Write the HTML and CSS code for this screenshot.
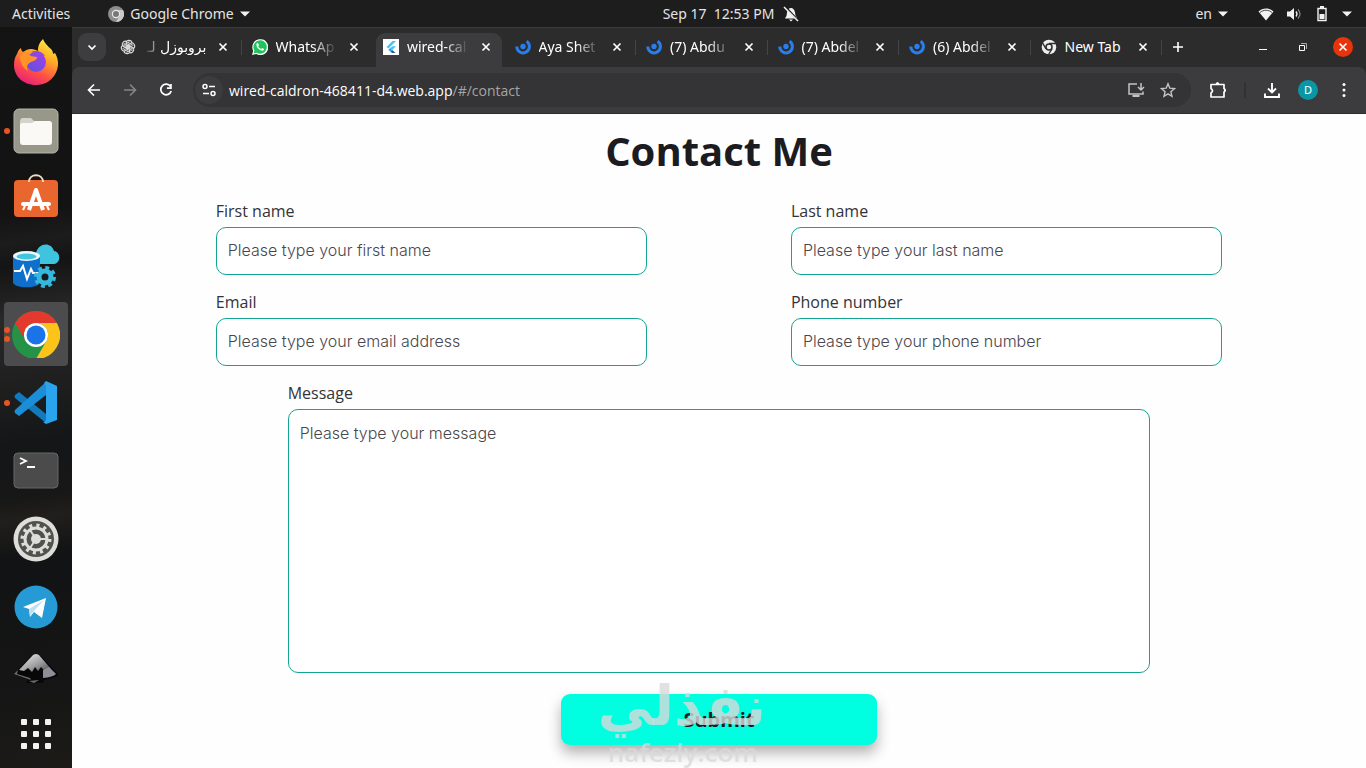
FILE: index.html
```html
<!DOCTYPE html>
<html lang="en">
<head>
    <meta charset="UTF-8">
    <meta name="viewport" content="width=device-width, initial-scale=1.0">
    <title>Contact Me</title>
    <link rel="stylesheet" href="styles.css">
</head>
<body>
    <!-- Shared symbols -->
    <svg class="symbols" aria-hidden="true">
        <symbol id="x" viewBox="0 0 16 16"><path d="M4.500 4.500l7 7M11.500 4.500l-7 7" stroke="currentColor" stroke-width="1.700"/></symbol>
        <symbol id="swirl" viewBox="0 0 16 16">
            <circle cx="8" cy="7.500" r="2.700" fill="#2b7de9"/>
            <path d="M1.800 7.500a6.300 6.300 0 1 0 9.800-5.200" fill="none" stroke="#2b7de9" stroke-width="3"/>
        </symbol>
        <symbol id="caret" viewBox="0 0 10 6"><path d="M0 .5h10L5 5.500z" fill="#f2f2f2"/></symbol>
    </svg>

    <header class="topbar">
        <div class="topbar-left">
            <span>Activities</span>
            <span class="app-menu">
                <svg width="16" height="16" viewBox="0 0 16 16"><circle cx="8" cy="8" r="8" fill="#8d8d8d"/><path d="M8 4h7a8 8 0 0 1-7 12l3.500-6z" fill="#c9c9c9"/><circle cx="8" cy="8" r="4.200" fill="#e8e8e8"/><circle cx="8" cy="8" r="3" fill="#777"/></svg>
                Google Chrome
                <svg width="10" height="6"><use href="#caret"/></svg>
            </span>
        </div>
        <div class="clock">
            <span>Sep 17&nbsp; 12:53 PM</span>
            <svg width="16" height="16" viewBox="0 0 16 16"><path d="M2.500 11.500c1.500-1.500 1-3 1.500-5C4.500 3.500 6 2 8 2s3.500 1.500 4 4.500c.5 2 0 3.500 2 5v1H2z" fill="#f2f2f2"/><path d="M6 13.500h4L8 15.500z" fill="#f2f2f2"/><path d="M2.500 1l13 14" stroke="#1d1d1d" stroke-width="2"/><path d="M1 1l14 14" stroke="#f2f2f2" stroke-width="1.500"/></svg>
        </div>
        <div class="topbar-right">
            <span class="lang">en <svg width="10" height="6"><use href="#caret"/></svg></span>
            <svg width="16" height="14" viewBox="0 0 16 14"><path d="M.5 4.500C4.500.5 11.500.5 15.500 4.500L8 13.500z" fill="#f2f2f2"/><path d="M2 5.500c3.500-3 8.500-3 12 0" fill="none" stroke="#1d1d1d" stroke-width=".8"/></svg>
            <svg width="16" height="14" viewBox="0 0 16 14"><path d="M1 4.500h3L8 1v12L4 9.500H1z" fill="#f2f2f2"/><path d="M10 4.500q2 2.500 0 5" fill="none" stroke="#f2f2f2" stroke-width="1.300"/><path d="M12 2.500q4 4.500 0 9" fill="none" stroke="#888" stroke-width="1.200"/></svg>
            <svg class="battery" width="10" height="16" viewBox="0 0 10 16"><path d="M1 2.500h8v12H1z" fill="none" stroke="#f2f2f2" stroke-width="1.400"/><path d="M3 0h4v2H3zM2.500 8h5v5h-5z" fill="#f2f2f2"/></svg>
            <svg width="10" height="6"><use href="#caret"/></svg>
        </div>
    </header>

    <div class="desktop">
        <nav class="dock">
            <div class="dock-item">
                <svg width="48" height="48" viewBox="0 0 48 48">
                    <defs>
                        <linearGradient id="ff" x1=".8" y1="0" x2=".3" y2="1"><stop offset="0" stop-color="#fff04a"/><stop offset=".35" stop-color="#ffae25"/><stop offset=".7" stop-color="#ff4f45"/><stop offset="1" stop-color="#e6207c"/></linearGradient>
                        <linearGradient id="ffp" x1="0" y1="1" x2="1" y2="0"><stop offset="0" stop-color="#5a55d8"/><stop offset="1" stop-color="#a63cf0"/></linearGradient>
                    </defs>
                    <path d="M5 16c1-3 2-5 4-6 0 2 1 3 2 4 3-2 5-3 8-3 3 0 5 1 7 2 0-6 2-9 5-12 2 5 5 7 8 10 2 2 2 4 2 5l2-1c3 5 4 11 2 17-3 9-11 15-21 15C11 47 2 38 2 27c0-5 1-8 3-11z" fill="url(#ff)"/>
                    <circle cx="24" cy="24" r="10" fill="url(#ffp)"/>
                    <path d="M8 17c4-2 8-2 11 1l6 1c0 3-3 4-6 5-4 2-5 5-3 9-5-3-8-8-8-16z" fill="#ff9327"/>
                    <path d="M19 14c5-2 11-1 14 4-3-1-5 0-8-2z" fill="#9146e8"/>
                </svg>
            </div>
            <div class="dock-item running">
                <svg width="48" height="48" viewBox="0 0 48 48"><rect x="2" y="3" width="44" height="44" rx="5" fill="#97978a" stroke="#b4b4aa"/><path d="M8 16q0-4 3-4h8l3 3h14q4 0 4 4v6H8z" fill="#d5d4cb"/><path d="M8 19q0-2 3-2h9l3-2h14q3 0 3 3v18q0 3-3 3H11q-3 0-3-3z" fill="#faf9f5"/></svg>
            </div>
            <div class="dock-item">
                <svg width="48" height="48" viewBox="0 0 48 48"><rect x="2" y="6" width="44" height="37" rx="4" fill="#e9662f"/><path d="M17 8c0-9 14-9 14 0" fill="none" stroke="#f0dcc3" stroke-width="2"/><path d="M17 36l7-20 7 20" fill="none" stroke="#fff" stroke-width="4" stroke-linejoin="round"/><path d="M11 30h26" stroke="#fff" stroke-width="4" stroke-linecap="round"/><path d="M13 32l-2 4M35 32l2 4" stroke="#fff" stroke-width="2"/></svg>
            </div>
            <div class="dock-item">
                <svg width="48" height="48" viewBox="0 0 48 48">
                    <path d="M25 22c-8-1-8-10-1-11 2-10 15-12 18-2 7 1 7 12 0 13z" fill="#3fc4e0"/>
                    <path d="M1 14v26c0 7 27 7 27 0V14z" fill="#0f70cb"/>
                    <ellipse cx="14.500" cy="14" rx="13.500" ry="5" fill="#eaf7fc"/><ellipse cx="14.500" cy="14.500" rx="10" ry="3" fill="#43c5df"/>
                    <path d="M2 29h6l3-5 4 13 4-10 2 4h7" fill="none" stroke="#fff" stroke-width="2"/>
                    <circle cx="33" cy="35" r="9.500" fill="none" stroke="#35b8de" stroke-width="3" stroke-dasharray="4 3.460"/>
                    <circle cx="33" cy="35" r="6" fill="none" stroke="#35b8de" stroke-width="5"/>
                </svg>
            </div>
            <div class="dock-item running active">
                <svg width="48" height="48" viewBox="0 0 48 48"><circle cx="24" cy="25" r="24" fill="#259347"/><path d="M3.200 13A24 24 0 0 1 44.800 13H24a12 12 0 0 0-10.400 18z" fill="#e33a2d"/><path d="M44.800 13A24 24 0 0 1 24 49l10.400-18A12 12 0 0 0 24 13z" fill="#fcc31b"/><circle cx="24" cy="25" r="12" fill="#fff"/><circle cx="24" cy="25" r="9.500" fill="#1a73e8"/></svg>
            </div>
            <div class="dock-item running">
                <svg width="48" height="48" viewBox="0 0 48 48"><path d="M34 14v22L7 14l-4 3q-1 1 0 3l31 25z" fill="#1279be"/><path d="M34 4L3 32q-1 1 0 3l4 3 27-21z" fill="#1a8fd8"/><path d="M34 3l11 5v34l-11 4-3-2c2 0 3-1 3-3V9c0-2-1-3-2-4z" fill="#2ba4ee"/></svg>
            </div>
            <div class="dock-item">
                <svg width="48" height="48" viewBox="0 0 48 48"><rect x="2" y="7" width="44" height="35" rx="4" fill="#4b4b4b" stroke="#666"/><path d="M8 12l6 3-6 3M15 21h8" fill="none" stroke="#fff" stroke-width="1.800"/></svg>
            </div>
            <div class="dock-item">
                <svg width="48" height="48" viewBox="0 0 48 48"><circle cx="24" cy="25" r="22.500" fill="#deded9"/><circle cx="24" cy="25" r="18" fill="#51514f"/><circle cx="24" cy="25" r="13.500" fill="none" stroke="#deded9" stroke-width="4" stroke-dasharray="3 4.070"/><circle cx="24" cy="25" r="11" fill="none" stroke="#deded9" stroke-width="3"/><circle cx="24" cy="25" r="5" fill="#deded9"/><path d="M24 25h11M24 25l-6-9M24 25l-6 9" stroke="#deded9" stroke-width="2"/></svg>
            </div>
            <div class="dock-item">
                <svg width="48" height="48" viewBox="0 0 48 48"><circle cx="24" cy="25" r="21.500" fill="#269ad4"/><path d="M11 25l23-9-4 20-8-6-4 5-1-8z" fill="#fff"/><path d="M17 27l15-9-11 12-3 4z" fill="#bfe0f2"/></svg>
            </div>
            <div class="dock-item">
                <svg width="48" height="48" viewBox="0 0 48 48">
                    <defs><linearGradient id="ink" x1="0" y1="0" x2="1" y2="1"><stop offset="0" stop-color="#f4f4f4"/><stop offset=".6" stop-color="#999"/><stop offset="1" stop-color="#444"/></linearGradient></defs>
                    <path d="M2 24L20 5q4-3 8 0l18 19q1 3-7 4l-7 2q1 3-5 3H15q-3-2 3-3z" fill="#08080a"/>
                    <path d="M7 20L21 5q3-2 6 0l12 14-7 1-3-3-3 4-3-4-3 5-4-4-4 3z" fill="url(#ink)"/>
                    <path d="M31 20l6-3 7 7q-3 3-13 4z" fill="#8d8f98"/><path d="M2 24l4-4-1 4 13 4 1 2zM17 31l10-1-5 3z" fill="#6d6d6d"/>
                </svg>
            </div>
            <div class="dock-apps">
                <i></i><i></i><i></i><i></i><i></i><i></i><i></i><i></i><i></i>
            </div>
        </nav>

        <section class="window">
            <div class="tabstrip">
                <button class="tab-search" aria-label="Search tabs"><svg width="12" height="12" viewBox="0 0 12 12"><path d="M2.500 4.500L6 8l3.500-3.500" fill="none" stroke="#fff" stroke-width="1.700"/></svg></button>
                <div class="tabs">
                    <div class="tab">
                        <svg width="16" height="16" viewBox="0 0 16 16"><g fill="none" stroke="#ddd" stroke-width="1.100"><path id="knot" d="M6 8V4.200c0-4 6-3.500 6 0M6 4.700l3.500-2M6 8l4.500 2.500"/><use href="#knot" transform="rotate(60 8 8)"/><use href="#knot" transform="rotate(120 8 8)"/><use href="#knot" transform="rotate(180 8 8)"/><use href="#knot" transform="rotate(240 8 8)"/><use href="#knot" transform="rotate(300 8 8)"/></g></svg>
                        <span class="tab-title rtl" lang="ar" dir="rtl">بروبوزل لـ</span>
                        <button class="tab-close" aria-label="Close"><svg width="16" height="16"><use href="#x"/></svg></button>
                    </div>
                    <div class="tab">
                        <svg width="16" height="16" viewBox="0 0 16 16"><path d="M0 16l1.200-4.200A8 8 0 1 1 4.200 15z" fill="#fff"/><path d="M1.500 14.500l.9-3A6.700 6.700 0 1 1 4.600 13.700z" fill="#1fc45a"/><path d="M5.200 4c-1.700 1.200-.4 4.200 1.200 5.800s4.300 2.700 5.500 1.100c.5-.8 0-1.300-1.600-2l-1 1.100C7.800 9.500 7 8.700 6.200 7.200l.8-1C6.300 4.200 6 3.600 5.200 4z" fill="#fff"/></svg>
                        <span class="tab-title">WhatsAp</span>
                        <button class="tab-close" aria-label="Close"><svg width="16" height="16"><use href="#x"/></svg></button>
                    </div>
                    <div class="tab current">
                        <svg width="16" height="16" viewBox="0 0 16 16"><path d="M0 0h16v16H0z" fill="#fff"/><path d="M9.500 2H13L5.500 9.500 3.500 8z" fill="#45c5f5"/><path d="M9.500 7.200H13L9.200 11l-2-2z" fill="#45c5f5"/><path d="M7.200 9l2 2-2 1.500-1.800-1.700z" fill="#2a9fe8"/><path d="M7.300 12.700L9.200 11l3.300 3H9.500z" fill="#1659a8"/></svg>
                        <span class="tab-title">wired-cal</span>
                        <button class="tab-close" aria-label="Close"><svg width="16" height="16"><use href="#x"/></svg></button>
                    </div>
                    <div class="tab">
                        <svg width="16" height="16"><use href="#swirl"/></svg>
                        <span class="tab-title">Aya Shet</span>
                        <button class="tab-close" aria-label="Close"><svg width="16" height="16"><use href="#x"/></svg></button>
                    </div>
                    <div class="tab">
                        <svg width="16" height="16"><use href="#swirl"/></svg>
                        <span class="tab-title">(7) Abdu</span>
                        <button class="tab-close" aria-label="Close"><svg width="16" height="16"><use href="#x"/></svg></button>
                    </div>
                    <div class="tab">
                        <svg width="16" height="16"><use href="#swirl"/></svg>
                        <span class="tab-title">(7) Abdel</span>
                        <button class="tab-close" aria-label="Close"><svg width="16" height="16"><use href="#x"/></svg></button>
                    </div>
                    <div class="tab">
                        <svg width="16" height="16"><use href="#swirl"/></svg>
                        <span class="tab-title">(6) Abdel</span>
                        <button class="tab-close" aria-label="Close"><svg width="16" height="16"><use href="#x"/></svg></button>
                    </div>
                    <div class="tab">
                        <svg width="16" height="16" viewBox="0 0 16 16"><circle cx="8" cy="8" r="7.300" fill="#eee"/><circle cx="8" cy="8" r="3" fill="#eee" stroke="#2c2c2c" stroke-width="1.500"/><path d="M8 4.500h7M5 9.800L1.500 3.800M11 9.800L7.500 15.500" stroke="#2c2c2c" stroke-width="1.300"/></svg>
                        <span class="tab-title full">New Tab</span>
                        <button class="tab-close" aria-label="Close"><svg width="16" height="16"><use href="#x"/></svg></button>
                    </div>
                </div>
                <button class="new-tab" aria-label="New tab"><svg width="12" height="12" viewBox="0 0 12 12"><path d="M6 1v10M1 6h10" stroke="#fff" stroke-width="1.600"/></svg></button>
                <div class="window-controls">
                    <button aria-label="Minimize"><svg width="10" height="10" viewBox="0 0 10 10"><path d="M1 7.500h8" stroke="#fff"/></svg></button>
                    <button aria-label="Restore"><svg width="10" height="10" viewBox="0 0 10 10"><path d="M1.500 3.500h5v5h-5z" fill="none" stroke="#fff"/><path d="M3 1.500h5.500V7" fill="none" stroke="#aaa"/></svg></button>
                    <button class="close" aria-label="Close window"><svg width="16" height="16"><use href="#x"/></svg></button>
                </div>
            </div>

            <div class="toolbar">
                <button class="tool" aria-label="Back"><svg width="16" height="16" viewBox="0 0 16 16"><path d="M14 8H3M8 2.500L2.500 8 8 13.500" fill="none" stroke="#fff" stroke-width="1.600"/></svg></button>
                <button class="tool" aria-label="Forward"><svg width="16" height="16" viewBox="0 0 16 16"><path d="M2 8h11M8 2.500L13.500 8 8 13.500" fill="none" stroke="#858585" stroke-width="1.600"/></svg></button>
                <button class="tool" aria-label="Reload"><svg width="16" height="16" viewBox="0 0 16 16"><path d="M12.500 4.500A5.300 5.300 0 1 0 13.200 9" fill="none" stroke="#fff" stroke-width="1.700"/><path d="M13.800 2v5H8.900V5.300h3.200V2z" fill="#fff"/></svg></button>
                <div class="omnibox">
                    <span class="site-info"><svg width="14" height="14" viewBox="0 0 14 14"><g fill="none" stroke="#fff" stroke-width="1.500"><circle cx="3" cy="3.500" r="2"/><circle cx="11" cy="10.500" r="2"/><path d="M7 3.500h6M1 10.500h6"/></g></svg></span>
                    <span class="url">wired-caldron-468411-d4.web.app<span class="path">/#/contact</span></span>
                    <svg width="18" height="16" viewBox="0 0 18 16"><path d="M10 2H2v10h14V9.500" fill="none" stroke="#c4c4c4" stroke-width="1.500"/><path d="M5.500 13h7v2h-7z" fill="#c4c4c4"/><path d="M14 1v7M11 5l3 3 3-3" fill="none" stroke="#c4c4c4" stroke-width="1.500"/></svg>
                    <svg width="16" height="16" viewBox="0 0 16 16"><path d="M8 1.800l1.800 4.400 4.700.4-3.600 3.100 1.100 4.600L8 11.800l-4 2.500 1.100-4.600L1.500 6.600l4.700-.4z" fill="none" stroke="#c4c4c4" stroke-width="1.400"/></svg>
                </div>
                <button class="tool" aria-label="Extensions"><svg width="18" height="18" viewBox="0 0 18 18"><path d="M2 3.500h13v4q2 1.500 0 3.500v5H2v-4q3-2.200 0-4.500z" fill="none" stroke="#fff" stroke-width="1.700" stroke-linejoin="round"/><path d="M6.500 3q2-4 4 0zM15 7.500q4 2 0 4z" fill="#fff"/></svg></button>
                <span class="divider"></span>
                <button class="tool" aria-label="Downloads"><svg width="18" height="18" viewBox="0 0 18 18"><path d="M9 2v9M5 7.500L9 11.500l4-4M2 12.500V16h14v-3.500" fill="none" stroke="#fff" stroke-width="1.900"/></svg></button>
                <button class="tool" aria-label="Profile"><span class="avatar">D</span></button>
                <button class="tool" aria-label="Menu"><svg width="4" height="16" viewBox="0 0 4 16"><g fill="#fff"><circle cx="2" cy="2.500" r="1.500"/><circle cx="2" cy="8" r="1.500"/><circle cx="2" cy="13.500" r="1.500"/></g></svg></button>
            </div>

            <main class="page">
                <h1>Contact Me</h1>
                <form class="contact-form">
                    <div class="row">
                        <div class="field">
                            <label for="first-name">First name</label>
                            <input type="text" id="first-name" placeholder="Please type your first name">
                        </div>
                        <div class="field">
                            <label for="last-name">Last name</label>
                            <input type="text" id="last-name" placeholder="Please type your last name">
                        </div>
                    </div>
                    <div class="row">
                        <div class="field">
                            <label for="email">Email</label>
                            <input type="email" id="email" placeholder="Please type your email address">
                        </div>
                        <div class="field">
                            <label for="phone">Phone number</label>
                            <input type="tel" id="phone" placeholder="Please type your phone number">
                        </div>
                    </div>
                    <div class="row">
                        <div class="field message">
                            <label for="message">Message</label>
                            <textarea id="message" placeholder="Please type your message"></textarea>
                        </div>
                    </div>
                    <div class="submit-wrap">
                        <button type="submit" class="submit">Submit</button>
                        <div class="watermark">
                            <span class="mark-ar" lang="ar" dir="rtl">نفذلي</span>
                            <span class="mark-en">nafezly.com</span>
                        </div>
                    </div>
                </form>
            </main>
        </section>
    </div>
</body>
</html>
```
FILE: styles.css
```css
* {
    box-sizing: border-box;
}
body {
    margin: 0;
    height: 100vh;
    display: flex;
    flex-direction: column;
    overflow: hidden;
    background-color: #1d1d1d;
    color: #f2f2f2;
    font-family: "Noto Sans", "Open Sans", "DejaVu Sans", sans-serif;
    font-size: 14px;
}
button {
    display: flex;
    align-items: center;
    justify-content: center;
    padding: 0;
    border: none;
    background: none;
    color: #fff;
    font: inherit;
    cursor: pointer;
}
svg {
    display: block;
    flex: none;
}
.symbols {
    position: absolute;
    width: 0;
    height: 0;
}

/* Top bar */
.topbar {
    flex: none;
    display: flex;
    align-items: center;
    height: 27px;
    padding: 0 14px 0 12px;
    color: #e4e4e4;
}
.topbar-left, .topbar-right {
    flex: 1;
    display: flex;
    align-items: center;
}
.topbar-left {
    gap: 38px;
}
.app-menu, .lang {
    display: flex;
    align-items: center;
    gap: 6px;
}
.clock {
    display: flex;
    align-items: center;
    gap: 9px;
    padding-left: 98px;
}
.topbar-right {
    justify-content: flex-end;
    gap: 12px;
}
.lang {
    margin-right: 18px;
}
.battery {
    margin: 0 3px;
}

/* Dock */
.desktop {
    flex: 1;
    display: flex;
    min-height: 0;
}
.dock {
    flex: none;
    width: 72px;
    padding-top: 1px;
    background: linear-gradient(172deg, #141414 0%, #131313 25%, #1c1c1c 29%, #141414 32%, #282828 39%, #1f1f1f 48%, #141617 56%, #171717 63%, #211f1c 66%, #121314 71%, #151515 88%, #1c1b18 100%);
}
.dock-item {
    position: relative;
    display: flex;
    align-items: center;
    justify-content: center;
    height: 68px;
}
.dock-item.running::before {
    content: "";
    position: absolute;
    left: 4px;
    top: 32px;
    width: 6px;
    height: 6px;
    border-radius: 50%;
    background-color: #e95420;
}
.dock-item.active {
    height: 64px;
    margin: 2px 4px;
    border-radius: 4px;
    background-color: #4c4c4e;
}
.dock-item.active::before {
    left: 0;
    top: 25px;
    box-shadow: 0 9px 0 #e95420;
}
.dock-apps {
    display: grid;
    grid-template-columns: repeat(3, 6px);
    gap: 6px;
    justify-content: center;
    margin-top: 11px;
}
.dock-apps i {
    height: 6px;
    border-radius: 1px;
    background-color: #f2f2f2;
}

/* Browser window */
.window {
    flex: 1;
    display: flex;
    flex-direction: column;
    min-width: 0;
    background-color: #2c2c2c;
}
.tabstrip {
    flex: none;
    display: flex;
    height: 40px;
    padding: 0 13px 0 6px;
    border-top: 1px solid #3a3a3a;
    font-size: 14px;
    color: #fff;
}
.tab-search {
    width: 28px;
    height: 28px;
    margin: 5px 4px 0 0;
    border-radius: 9px;
    background-color: #3d3c3e;
}
.tabs {
    flex: 1;
    display: flex;
    max-width: 1052px;
}
.tab {
    position: relative;
    flex: 1;
    display: flex;
    align-items: center;
    gap: 8px;
    min-width: 0;
    padding: 0 11px 2px 10px;
}
.tab::after {
    content: "";
    position: absolute;
    right: 0;
    top: 12px;
    width: 1px;
    height: 15px;
    background-color: #454446;
}
.tab.current::after, .tab:nth-child(2)::after {
    display: none;
}
.tab.current::before {
    content: "";
    position: absolute;
    z-index: 0;
    inset: 5px 3px 0;
    border-radius: 9px 9px 0 0;
    background-color: #3c3b3d;
}
.tab > * {
    position: relative;
    z-index: 1;
}
.tab-title {
    flex: 1;
    overflow: hidden;
    white-space: nowrap;
    mask-image: linear-gradient(to right, #000 60%, transparent 98%);
}
.tab-title.rtl {
    font-family: "DejaVu Sans", sans-serif;
    mask-image: linear-gradient(to left, #000 70%, transparent);
}
.tab-title.full {
    mask-image: none;
}
.new-tab {
    width: 32px;
    padding-bottom: 2px;
}
.window-controls {
    display: flex;
    align-items: center;
    gap: 20px;
    margin-left: auto;
    padding-bottom: 2px;
}
.window-controls button {
    width: 20px;
    height: 20px;
}
.window-controls .close {
    border-radius: 50%;
    background-color: #e9330b;
}
.toolbar {
    flex: none;
    display: flex;
    align-items: center;
    height: 47px;
    padding: 0 4px;
    border-bottom: 1px solid #2c2c2c;
    border-radius: 8px 8px 0 0;
    background-color: #3c3b3d;
}
.tool {
    width: 36px;
    height: 34px;
}
.omnibox {
    flex: 1;
    display: flex;
    align-items: center;
    gap: 15px;
    height: 34px;
    margin: 0 9px;
    padding: 0 15px 0 2px;
    border-radius: 17px;
    background-color: #343335;
}
.site-info {
    display: flex;
    align-items: center;
    justify-content: center;
    width: 28px;
    height: 28px;
    margin-right: -9px;
    border-radius: 50%;
    background-color: #3c3b3d;
}
.url {
    flex: 1;
    color: #fff;
    font-family: "Open Sans", sans-serif;
}
.path {
    color: #a5a5a5;
}
.divider {
    width: 2px;
    height: 16px;
    margin: 0 8px;
    background-color: #323133;
}
.avatar {
    width: 20px;
    height: 20px;
    border-radius: 50%;
    background-color: #0a97a5;
    font-size: 11px;
    line-height: 20px;
}

/* Contact page */
.page {
    flex: 1;
    padding-top: 13px;
    overflow: hidden;
    background-color: #fefefe;
    color: #1c1b1f;
    font-family: "Open Sans", sans-serif;
}
h1 {
    margin: 0 0 24px;
    font-size: 40px;
    line-height: 48px;
    text-align: center;
}
.contact-form {
    display: flex;
    flex-direction: column;
    gap: 15px;
}
.row {
    display: flex;
    justify-content: space-evenly;
}
.field {
    display: flex;
    flex-direction: column;
    gap: 4px;
    width: 33.333%;
}
.field.message {
    width: 66.667%;
}
.field label {
    color: #343338;
    font-size: 16px;
    line-height: 24px;
}
.field input, .field textarea {
    width: 100%;
    height: 48px;
    padding: 0 11px 2px;
    border: 1px solid #12a594;
    border-radius: 10px;
    background-color: #fff;
    color: #1c1b1f;
    font-family: Inter, sans-serif;
    font-size: 16px;
    font-weight: 300;
    outline: none;
}
.field textarea {
    display: block;
    height: 264px;
    padding-top: 13px;
    line-height: 20px;
    resize: none;
}
.field input::placeholder, .field textarea::placeholder {
    color: #49474e;
    opacity: 1;
}
.submit-wrap {
    position: relative;
    display: flex;
    justify-content: center;
    margin-top: 6px;
}
.submit {
    width: 316px;
    height: 51px;
    border-radius: 9px;
    background-color: #00ffe1;
    box-shadow: 0 8px 14px rgba(0, 0, 0, 0.3);
    color: #1c1b1f;
    font-size: 20px;
    font-weight: 700;
}
.watermark {
    position: absolute;
    top: -20px;
    left: 50%;
    width: 166px;
    margin-left: -119px;
    color: rgba(217, 217, 217, 0.8);
    text-align: center;
    pointer-events: none;
}
.watermark span {
    display: block;
}
.mark-ar {
    font-family: "DejaVu Sans", sans-serif;
    font-size: 55px;
    font-weight: bold;
    line-height: 64px;
}
.mark-en {
    font-family: "Open Sans", sans-serif;
    font-size: 26px;
    font-weight: 600;
    line-height: 28px;
}
```
